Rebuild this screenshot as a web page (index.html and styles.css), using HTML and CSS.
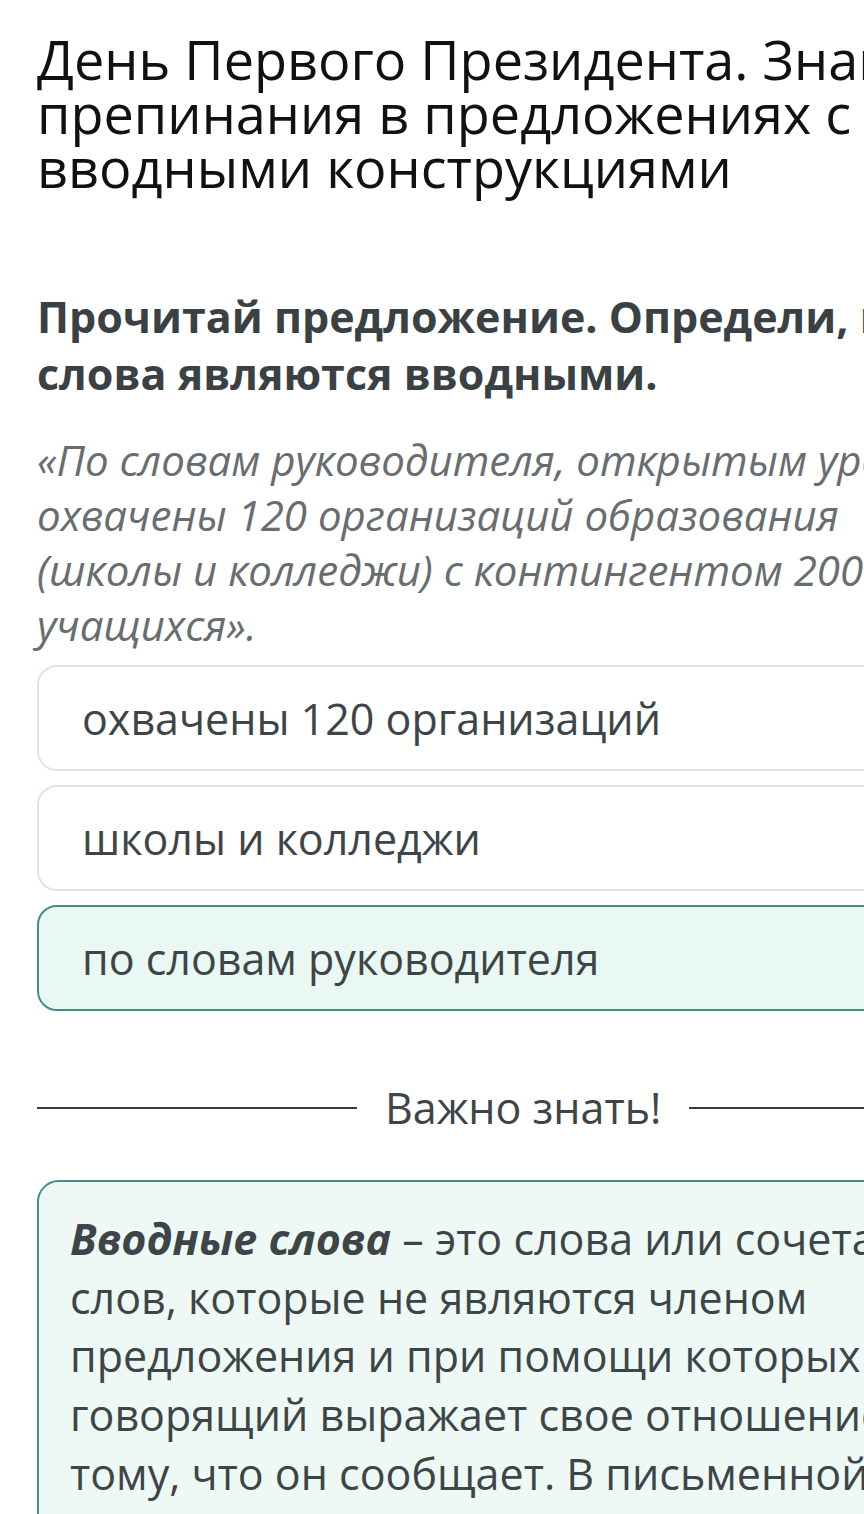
FILE: index.html
```html
<!DOCTYPE html>
<html lang="ru">
<head>
    <meta charset="UTF-8">
    <meta name="viewport" content="width=device-width, initial-scale=1.0">
    <title>Вводные конструкции</title>
    <link rel="stylesheet" href="styles.css">
</head>
<body>
    <div class="page">
        <h1 class="lesson-title">День Первого Президента. Знаки препинания в предложениях с вводными конструкциями</h1>

        <div class="task">
            <p class="task-question">Прочитай предложение. Определи, какие слова являются вводными.</p>
            <p class="task-quote">«По словам руководителя, открытым уроком<br>охвачены 120 организаций образования<br>(школы и колледжи) с контингентом 200 тысяч<br>учащихся».</p>

            <div class="options">
                <div class="option">охвачены 120 организаций</div>
                <div class="option">школы и колледжи</div>
                <div class="option selected">по словам руководителя</div>
            </div>
        </div>

        <div class="divider">
            <span class="divider-line"></span>
            <span class="divider-text">Важно знать!</span>
            <span class="divider-line"></span>
        </div>

        <div class="info-box">
            <p><b><i>Вводные слова</i></b> – это слова или сочетания слов, которые не являются членом предложения и при помощи которых говорящий выражает свое отношение к тому, что он сообщает. В письменной речи вводные слова выделяются запятыми.</p>
        </div>
    </div>
</body>
</html>
```

FILE: styles.css
```css
* {
    margin: 0;
    padding: 0;
    box-sizing: border-box;
}

html, body {
    overflow: hidden;
}

body {
    font-family: 'Open Sans', 'Noto Sans', sans-serif;
    background: #fff;
    color: #3b4246;
}

.page {
    width: 1037px;
    padding: 32px 0 0 37px;
}

.lesson-title {
    font-size: 54px;
    font-weight: 400;
    line-height: 54px;
    color: #111;
    margin-bottom: 94px;
}

.task-question {
    font-size: 43px;
    font-weight: 700;
    line-height: 57px;
    color: #3a4145;
    margin-bottom: 30px;
}

.task-quote {
    font-size: 42px;
    font-style: italic;
    line-height: 55px;
    color: #686d71;
    white-space: nowrap;
}

.options {
    display: flex;
    flex-direction: column;
    gap: 14px;
    margin-top: 13px;
}

.option {
    height: 106px;
    display: flex;
    align-items: center;
    padding-left: 43px;
    border: 2px solid #e0e4e6;
    border-radius: 20px;
    font-size: 43px;
    color: #3d4548;
}

.option.selected {
    border-color: #41908a;
    background: #eaf8f3;
}

.divider {
    display: flex;
    align-items: center;
    gap: 28px;
    margin-top: 68px;
}

.divider-line {
    width: 320px;
    height: 2px;
    background: #3a3a3a;
}

.divider-text {
    font-size: 43px;
    line-height: 58px;
    color: #3d4548;
}

.info-box {
    margin-top: 43px;
    border: 2px solid #41908a;
    border-radius: 22px;
    background: #eef9f6;
    padding: 28px 31px 40px 31px;
    font-size: 43px;
    line-height: 58.7px;
    color: #3d4548;
}
```
